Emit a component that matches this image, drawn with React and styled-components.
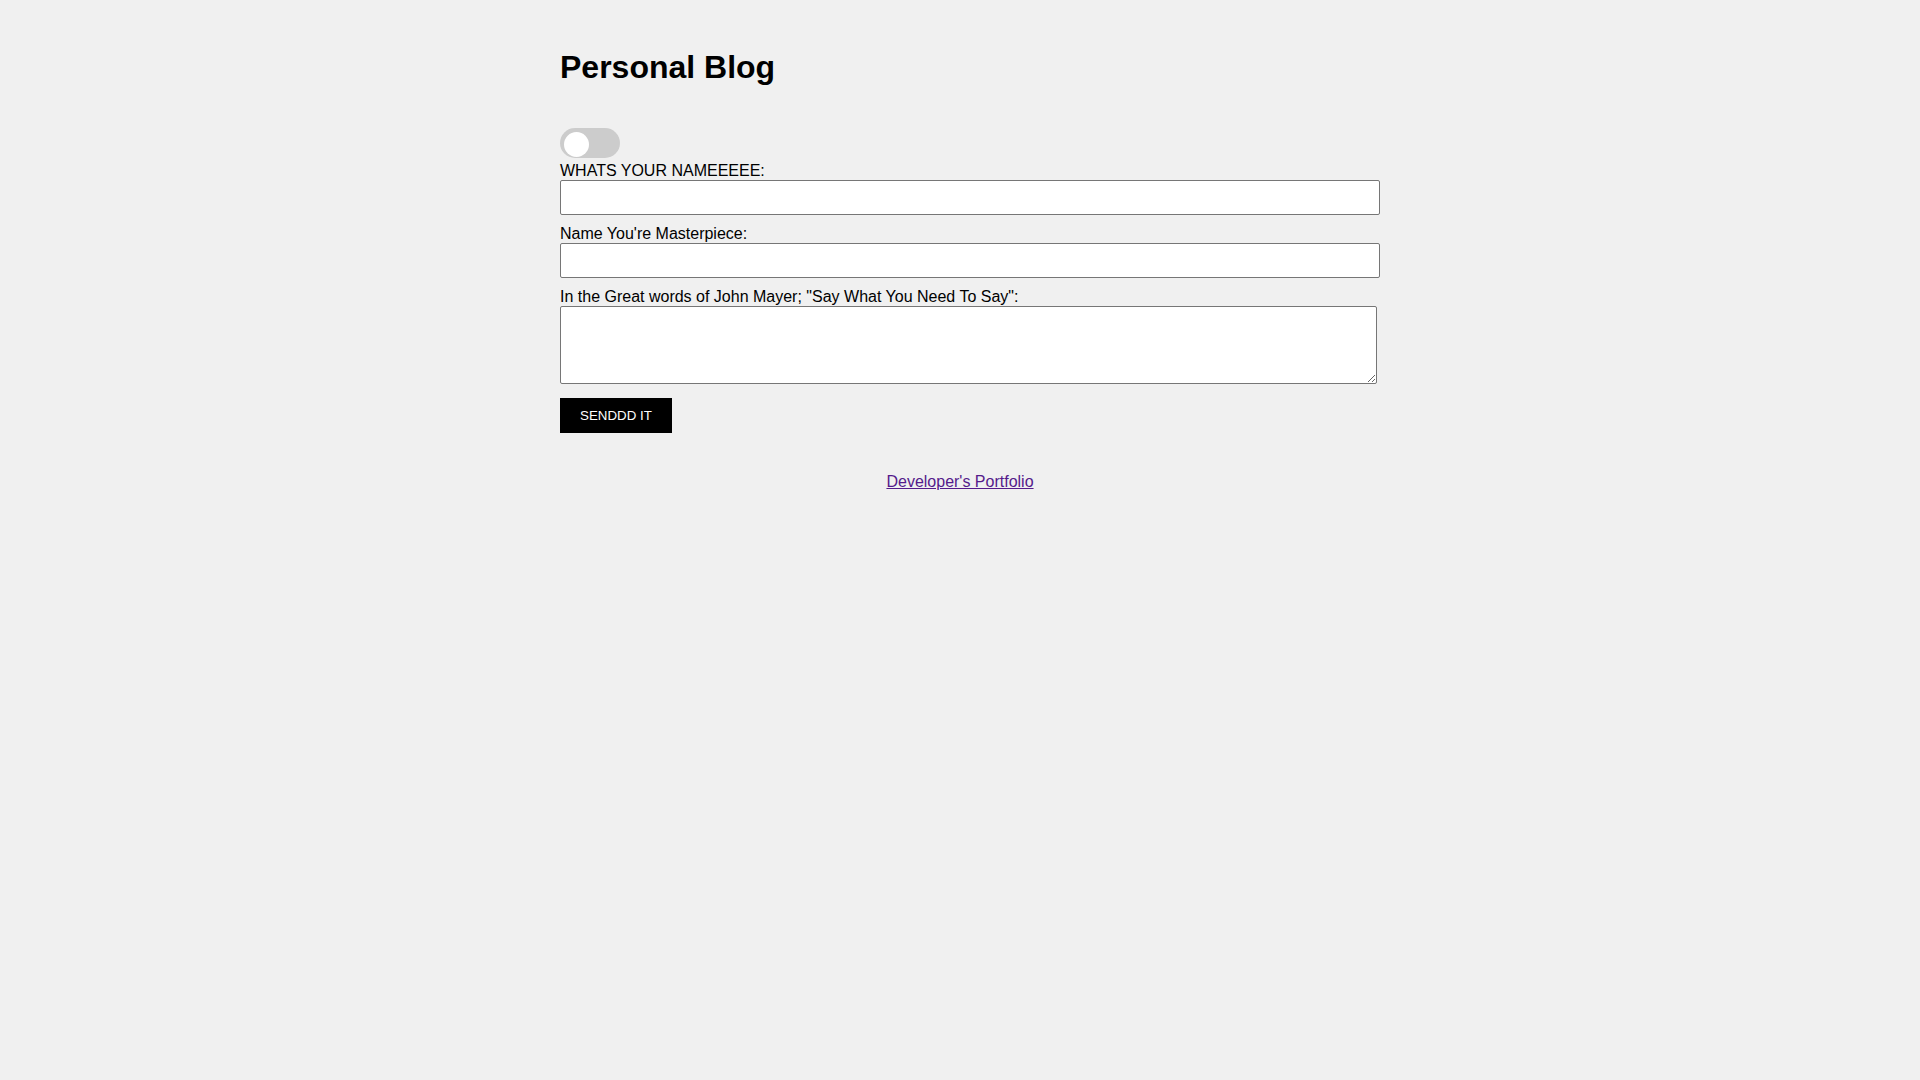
import React, { useState } from "react";
import styled, { createGlobalStyle } from "styled-components";

const GlobalStyle = createGlobalStyle`
  html, body {
    margin: 0;
    padding: 0;
    background: #f0f0f0;
    font-family: "Liberation Sans", Arial, sans-serif;
    color: #000;
  }
`;

const Page = styled.main`
  width: 800px;
  margin: 0 auto;
  padding-top: 1px;
  padding-bottom: 40px;
`;

const Title = styled.h1`
  font-size: 32px;
  font-weight: bold;
  margin: 48px 0 42px 0;
  line-height: normal;
`;

const Switch = styled.label`
  display: block;
  position: relative;
  width: 60px;
  height: 30px;
  margin-bottom: 4px;
  cursor: pointer;
`;

const SwitchTrack = styled.span`
  display: block;
  width: 100%;
  height: 100%;
  border-radius: 30px;
  background: ${(p) => (p.$on ? "#2196f3" : "#cccccc")};
  transition: background 0.2s;
`;

const SwitchKnob = styled.span`
  position: absolute;
  top: 4px;
  left: ${(p) => (p.$on ? "31px" : "4px")};
  width: 25px;
  height: 25px;
  border-radius: 50%;
  background: #ffffff;
  transition: left 0.2s;
`;

const Form = styled.form`
  display: flex;
  flex-direction: column;
  align-items: flex-start;
`;

const FieldLabel = styled.label`
  display: block;
  font-size: 16px;
  line-height: normal;
`;

const TextInput = styled.input`
  display: block;
  box-sizing: content-box;
  width: 800px;
  padding: 9px;
  margin: 0 0 10px 0;
  border: 1px solid #767676;
  border-radius: 2px;
  background: #fff;
  font-family: "Liberation Sans", Arial, sans-serif;
  font-size: 13.333px;
  line-height: 15px;
  height: 15px;
`;

const TextArea = styled.textarea`
  display: block;
  box-sizing: border-box;
  width: 817px;
  height: 78px;
  padding: 8px;
  margin: 0 0 14px 0;
  border: 1px solid #767676;
  border-radius: 2px;
  background: #fff;
  font-family: "Liberation Mono", monospace;
  font-size: 13.333px;
`;

const SubmitButton = styled.button`
  background: #000;
  color: #fff;
  border: none;
  padding: 10px 20px;
  font-family: "Liberation Sans", Arial, sans-serif;
  font-size: 13.333px;
  line-height: 15px;
  white-space: nowrap;
  cursor: pointer;
`;

const Footer = styled.footer`
  margin-top: 40px;
  text-align: center;
  font-size: 16px;
`;

const FooterLink = styled.a`
  color: #551a8b;
  text-decoration: underline;
`;

export default function App() {
  const [on, setOn] = useState(false);
  return (
    <>
      <GlobalStyle />
      <Page>
        <Title>Personal Blog</Title>
        <Switch onClick={() => setOn(!on)}>
          <SwitchTrack $on={on} />
          <SwitchKnob $on={on} />
        </Switch>
        <Form onSubmit={(e) => e.preventDefault()}>
          <FieldLabel htmlFor="name">WHATS YOUR NAMEEEEE:</FieldLabel>
          <TextInput id="name" type="text" />
          <FieldLabel htmlFor="title">Name You're Masterpiece:</FieldLabel>
          <TextInput id="title" type="text" />
          <FieldLabel htmlFor="content">
            In the Great words of John Mayer; "Say What You Need To Say":
          </FieldLabel>
          <TextArea id="content" />
          <SubmitButton type="submit">SENDDD IT</SubmitButton>
        </Form>
        <Footer>
          <FooterLink href="#portfolio">Developer's Portfolio</FooterLink>
        </Footer>
      </Page>
    </>
  );
}
